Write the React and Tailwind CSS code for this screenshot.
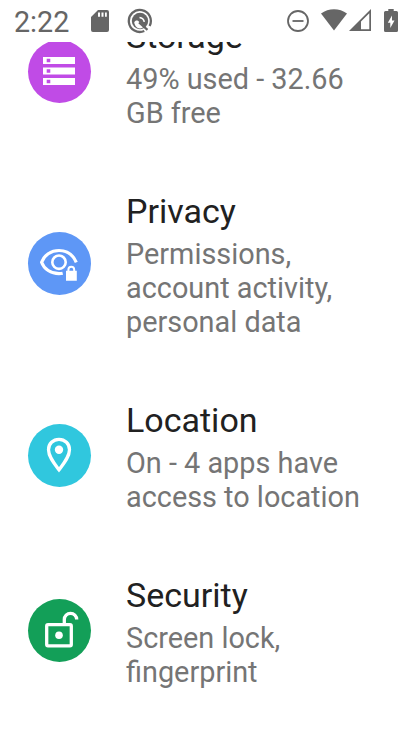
function StorageIcon() {
  return (
    <svg viewBox="0 0 63 63" className="size-full">
      <g fill="#fff">
        <path d="M15 17h32v7H15zM15 27.5h32v7H15zM15 38h32v7H15z" />
      </g>
      <path fill="#c04be6" d="M18.7 18.7h3.6v3.6h-3.6zM18.7 29.2h3.6v3.6h-3.6zM18.7 39.7h3.6v3.6h-3.6z" />
    </svg>
  );
}

function PrivacyIcon() {
  return (
    <svg viewBox="0 0 63 63" className="size-full" fill="none" stroke="#fff">
      <path strokeWidth="3.2" d="M48.3 30.3C45 22.8 38.5 18.5 31 18.5c-8 0-15 4.7-17.4 11.7C16 37 23 41.7 31 41.7c1.3 0 2.5-.1 3.7-.4" />
      <circle cx="31" cy="30.2" r="6.7" strokeWidth="2.6" />
      <path strokeWidth="2" d="M40.4 40v-2.3a2.9 2.9 0 0 1 5.8 0V40" />
      <path fill="#fff" stroke="none" d="M38 38.7h10.8v10H38z" />
    </svg>
  );
}

function LocationIcon() {
  return (
    <svg viewBox="0 0 63 63" className="size-full">
      <path fill="none" stroke="#fff" strokeWidth="3.3" d="M31 15.3c-5.9 0-10.5 4.5-10.5 10.4 0 6.8 5.3 13.3 10.5 20.1 5.2-6.8 10.5-13.3 10.5-20.1 0-5.9-4.6-10.4-10.5-10.4z" />
      <circle cx="31" cy="25.8" r="4.2" fill="#fff" />
    </svg>
  );
}

function SecurityIcon() {
  return (
    <svg viewBox="0 0 63 63" className="size-full">
      <g fill="none" stroke="#fff" strokeWidth="3.3">
        <rect x="18.7" y="25.7" width="24.6" height="21.2" rx="1.3" />
        <path d="M36.3 25v-4.5a6.2 6.2 0 0 1 12.4 0" />
      </g>
      <circle cx="31" cy="36.3" r="3.8" fill="#fff" />
    </svg>
  );
}

const items = [
  { title: "Storage", lines: ["49% used - 32.66", "GB free"], color: "bg-[#c04be6]", Icon: StorageIcon },
  { title: "Privacy", lines: ["Permissions,", "account activity,", "personal data"], color: "bg-[#5e97f6]", Icon: PrivacyIcon },
  { title: "Location", lines: ["On - 4 apps have", "access to location"], color: "bg-[#30c7de]", Icon: LocationIcon },
  { title: "Security", lines: ["Screen lock,", "fingerprint"], color: "bg-[#139f58]", Icon: SecurityIcon },
];

function StatusBar() {
  return (
    <header className="flex h-[42px] shrink-0 items-start justify-between bg-white text-[#666]">
      <div className="flex">
        <span className="ml-[14px] mt-[5px] w-[77px] text-[28.7px] leading-[34px]">2:22</span>
        <svg width="18" height="24" viewBox="0 0 18 24" className="mt-[9px]" fill="currentColor">
          <path fillRule="evenodd" d="M7 1h9a2 2 0 0 1 2 2v18a2 2 0 0 1-2 2H2a2 2 0 0 1-2-2V8zM7 3.5v4.3h2V3.5zM10.5 3.5v4.3h2V3.5zM14 3.5v4.3h1.8V3.5z" />
        </svg>
        <svg width="26" height="26" viewBox="0 0 26 26" className="ml-[17.5px] mt-[8px]" fill="none">
          <path stroke="currentColor" strokeWidth="2.3" d="M17.3 23A11 11 0 1 1 22.6 18" />
          <circle cx="13" cy="13" r="8.2" fill="currentColor" />
          <path fill="#fff" d="M7.2 14.2C8.2 12.4 9.6 12 11 12.8l6.2 5.8c-1.200 1.200-2.600 1.800-4.200 1.800-3 0-5.200-2.300-5.800-6.200z" />
          <path stroke="#fff" strokeWidth="1.6" d="M12.500 9.500c2.500.3 4.300 2 4.800 4.300" />
          <path stroke="currentColor" strokeWidth="2.200" d="M12 14.500 20.500 21.800" />
        </svg>
      </div>
      <div className="flex pr-[14px]">
        <svg width="22" height="22" viewBox="0 0 22 22" className="mt-[10px]" fill="none" stroke="currentColor" strokeWidth="1.8">
          <circle cx="11" cy="11" r="10" />
          <path d="M5.5 11h11" />
        </svg>
        <svg width="26" height="22" viewBox="0 0 26 22" className="ml-[12px] mt-[9px]" fill="currentColor">
          <path d="M0 4.5C7.5-1.2 18.5-1.2 26 4.5L13 21.5z" />
        </svg>
        <svg width="22" height="22" viewBox="0 0 22 22" className="ml-[2px] mt-[9px]">
          <path fill="currentColor" fillRule="evenodd" d="M0 22 22 0v22zM12 20.300h8.300V4.200L12 12.500z" />
        </svg>
        <svg width="14" height="23" viewBox="0 0 14 23" className="ml-[13px] mt-[9px]" fill="currentColor">
          <path fillRule="evenodd" d="M4.3 0h5.4v2H12.5a1.5 1.5 0 0 1 1.5 1.5v18a1.5 1.5 0 0 1-1.5 1.5h-11A1.5 1.5 0 0 1 0 21.5v-18A1.5 1.5 0 0 1 1.5 2h2.8zM8 6.5l-4.2 7.3h2.500V19l4.200-7.500H8z" />
        </svg>
      </div>
    </header>
  );
}

export default function App() {
  return (
    <div className="flex h-[732px] w-[412px] flex-col overflow-hidden bg-white font-[Roboto,sans-serif]">
      <StatusBar />
      <main className="min-h-0 flex-1 overflow-hidden">
        <div className="-mt-[26px] flex flex-col gap-[61px]">
          {items.map(({ title, lines, color, Icon }) => (
            <section key={title} className="flex items-center pl-[28px]">
              <div className={`mb-[3px] size-[63px] shrink-0 overflow-hidden rounded-full ${color}`}>
                <Icon />
              </div>
              <div className="ml-[35px] whitespace-nowrap">
                <h2 className="text-[34px] leading-[40px] text-[#212121]">{title}</h2>
                <div className="mt-[6px] text-[28.85px] leading-[34px] text-[#757575]">
                  {lines.map((line) => (
                    <p key={line}>{line}</p>
                  ))}
                </div>
              </div>
            </section>
          ))}
        </div>
      </main>
    </div>
  );
}
